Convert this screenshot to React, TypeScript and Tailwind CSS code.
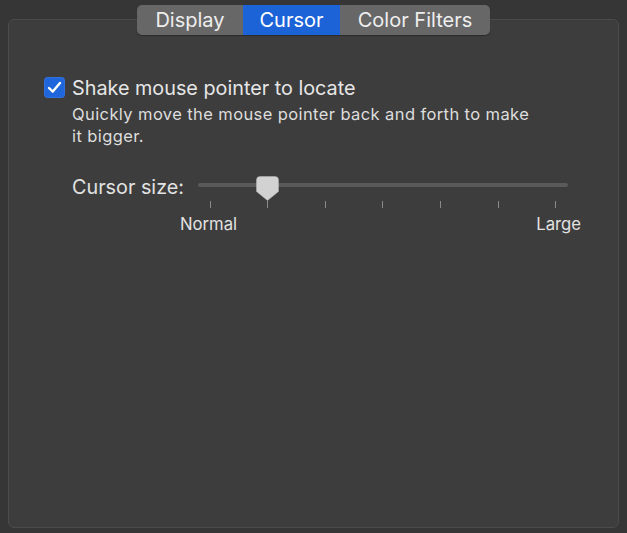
import React from "react";

export default function App() {
  const font = { fontFamily: "Inter, 'Noto Sans', 'Liberation Sans', sans-serif" };
  return (
    <div className="w-[627px] h-[533px] bg-[#363636] overflow-hidden flex flex-col" style={font}>
      {/* segmented control */}
      <div className="pt-[5px] flex justify-center relative z-10">
        <div className="flex h-[30px] w-[353px] rounded-[5px] bg-[#676767] overflow-hidden shadow-[0_1px_1px_rgba(0,0,0,0.3)] text-[20px] text-[#eeeeee]">
          <div className="w-[106px] flex items-center justify-center">Display</div>
          <div className="w-[97px] flex items-center justify-center bg-[#1c63d8] text-white">Cursor</div>
          <div className="flex-1 flex items-center justify-center">Color Filters</div>
        </div>
      </div>
      {/* panel */}
      <div className="ml-[8px] mt-[-16px] w-[611px] h-[509px] rounded-[6px] border border-[#4b4b4b] bg-[#3d3d3d] pl-[35px] pt-[57px]">
        <div className="flex items-start">
          <div className="w-[21px] h-[21px] rounded-[4px] bg-[#1f65dc] flex items-center justify-center shadow-[inset_0_0_0_1px_rgba(255,255,255,0.08)]">
            <svg width="15" height="13" viewBox="0 0 15 13" fill="none">
              <path d="M2 7 L5.8 10.6 L13 2" stroke="white" strokeWidth="2.4" strokeLinecap="round" strokeLinejoin="round" />
            </svg>
          </div>
          <div className="ml-[7px] text-[19.8px] leading-[22px] text-[#e6e6e6]">Shake mouse pointer to locate</div>
        </div>
        <div className="ml-[28px] mt-[4px] w-[470px] text-[16.5px] tracking-[0.4px] leading-[22px] text-[#dedede]">
          Quickly move the mouse pointer back and forth to make it bigger.
        </div>
        <div className="ml-[28px] mt-[29px] flex items-start">
          <div className="text-[19.8px] leading-[22px] text-[#e2e2e2] w-[126px] pt-[-1px]">Cursor size:</div>
          <div className="w-[370px] flex flex-col">
            <div className="relative h-[25px]">
              <div className="absolute left-0 right-0 top-[7px] h-[4px] rounded-full bg-[#5a5a5a]" />
              <svg className="absolute left-[58px] top-0" width="23" height="25" viewBox="0 0 23 25">
                <path d="M4 0.5 H19 Q22.5 0.5 22.5 4 V15.5 L11.5 24.5 L0.5 15.5 V4 Q0.5 0.5 4 0.5 Z" fill="#d2d2d2" stroke="#b8b8b8" strokeWidth="0.5" />
              </svg>
            </div>
            <div className="flex justify-between px-[11.5px] h-[7px]">
              {[0, 1, 2, 3, 4, 5, 6].map((i) => (
                <div key={i} className="w-[1px] h-[7px] bg-[#8a8a8a]" />
              ))}
            </div>
          </div>
        </div>
        <div className="ml-[136px] mt-[5px] w-[401px] flex justify-between text-[16.7px] leading-[22px] text-[#e2e2e2]">
          <span>Normal</span>
          <span>Large</span>
        </div>
      </div>
    </div>
  );
}
